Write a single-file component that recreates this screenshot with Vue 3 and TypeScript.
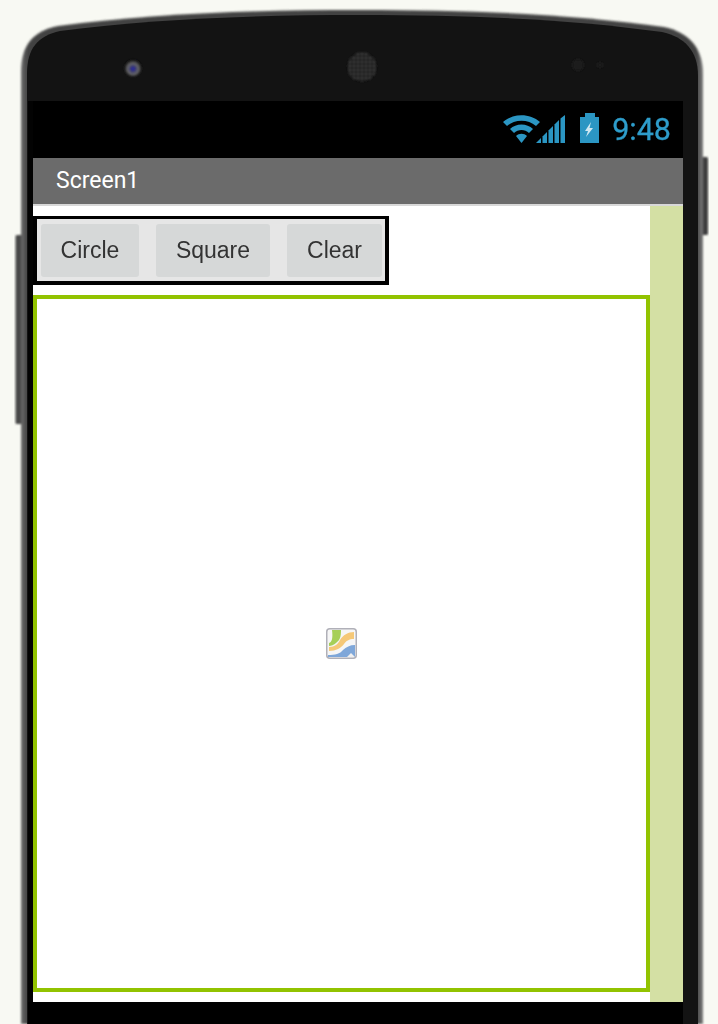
<script setup lang="ts">
const buttons: { label: string; width: number }[] = [
  { label: 'Circle', width: 98 },
  { label: 'Square', width: 114 },
  { label: 'Clear', width: 95 },
]
</script>

<template>
  <div class="page">
    <svg class="body" width="718" height="1024" viewBox="0 0 718 1024">
      <defs>
        <linearGradient id="edge" x1="0" y1="0" x2="1" y2="0">
          <stop offset="0" stop-color="#6c6c6c" />
          <stop offset="0.01" stop-color="#424242" />
          <stop offset="0.99" stop-color="#424242" />
          <stop offset="1" stop-color="#7a7a7a" />
        </linearGradient>
        <radialGradient id="lens" cx="0.5" cy="0.55" r="0.5">
          <stop offset="0" stop-color="#2626c8" />
          <stop offset="0.28" stop-color="#30306a" />
          <stop offset="0.62" stop-color="#6c6c6e" />
          <stop offset="1" stop-color="#141414" />
        </radialGradient>
        <pattern id="mesh" width="4" height="4" patternUnits="userSpaceOnUse">
          <rect width="4" height="4" fill="#1a1a1a" />
          <circle cx="2" cy="2" r="1.3" fill="#444" />
        </pattern>
        <filter id="soft"><feGaussianBlur stdDeviation="0.8" /></filter>
      </defs>
      <rect x="15.5" y="235" width="10" height="189" rx="1.5" fill="#474747" filter="url(#soft)" />
      <rect x="698" y="157" width="10" height="78" rx="1.5" fill="#3c3c3c" filter="url(#soft)" />
      <path
        d="M21 1024V72C21 45 33 31 58 26C150 14 250 10 360 10C470 10 570 14 664 27C688 32 703 47 703 74V1024Z"
        fill="url(#edge)"
        filter="url(#soft)"
      />
      <path
        d="M27 1024V74C27 48 38 36 60 31C150 19 250 15 360 15C470 15 570 19 662 32C684 37 698 50 698 76V1024Z"
        fill="#131313"
      />
      <rect x="28" y="101" width="5" height="923" fill="#030303" />
      <rect x="28" y="1002" width="655" height="22" fill="#000" />
      <circle cx="133" cy="68" r="8.5" fill="url(#lens)" filter="url(#soft)" />
      <circle cx="362" cy="67" r="14.5" fill="url(#mesh)" filter="url(#soft)" />
      <circle cx="578" cy="65" r="6" fill="#1a1a1a" filter="url(#soft)" />
      <circle cx="600" cy="65" r="3" fill="#1b1b1b" filter="url(#soft)" />
    </svg>

    <div class="screen">
      <div class="status">
        <svg class="status-icons" width="100" height="34" viewBox="0 0 100 34">
          <g fill="#2b96c3">
            <path d="M3 9C13 0 30 0 40 9L36 13C28 6 15 6 7 13Z" />
            <path d="M10 16C16 10 27 10 33 16L29 20C25 16 18 16 14 20Z" />
            <path d="M16 23C19 20 24 20 27 23L21.5 30Z" />
            <path d="M36 30L41 25V30Z" />
            <path d="M42.5 30V23.5L47 19V30Z" />
            <path d="M48.5 30V17.5L53 13V30Z" />
            <path d="M54.5 30V11.5L59 7V30Z" />
            <path d="M60.5 30V5.5L65 2V30Z" />
            <path d="M80 4H85V0H95V4H99V30H80Z" />
          </g>
          <path d="M91 9L85 18H88L86 24L93 15H89.5Z" fill="#cfe8f2" />
        </svg>
        <span class="time">9:48</span>
      </div>
      <div class="title">Screen1</div>
      <div class="content">
        <div class="main">
          <div class="toolbar">
            <button
              v-for="b in buttons"
              :key="b.label"
              type="button"
              class="btn"
              :style="{ width: b.width + 'px' }"
            >
              {{ b.label }}
            </button>
          </div>
          <div class="canvas">
            <svg class="broken" width="31" height="31" viewBox="0 0 31 31">
              <rect x="0.75" y="0.75" width="29.5" height="29.5" rx="3" fill="#f6f6f6" stroke="#b0b0b8" stroke-width="1.5" />
              <path d="M6 2H15C15 9 14 12 10 15C8 17 5 18 3 18V15C6 14 7 10 6 2Z" fill="#a6cf58" />
              <path d="M28 4V11C23 11 20 13 18 16C15 20 10 23 3 23V19C9 19 12 16 14 12C17 7 22 4 28 4Z" fill="#f5c878" />
              <path d="M29 17V29H2V27C9 27 14 26 17 22C20 19 24 17 29 17Z" fill="#7fa7d9" />
              <path d="M21 29L25 25L29 29Z" fill="#f0f0f0" />
            </svg>
          </div>
        </div>
        <div class="strip"></div>
      </div>
    </div>
  </div>
</template>

<style scoped>
.page {
  position: relative;
  width: 718px;
  height: 1024px;
  overflow: hidden;
  background: #f8f9f3;
}
.body {
  position: absolute;
  left: 0;
  top: 0;
}
.screen {
  position: relative;
  width: 650px;
  margin-left: 33px;
  padding-top: 101px;
  display: flex;
  flex-direction: column;
}
.status {
  height: 57px;
  background: #000;
  display: flex;
  align-items: center;
  justify-content: flex-end;
  padding-right: 12px;
  gap: 12px;
  box-sizing: border-box;
}
.status-icons {
  margin-top: 1px;
  filter: blur(0.7px);
}
.time {
  font-family: Roboto, sans-serif;
  font-size: 30.5px;
  color: #2e9dcb;
  line-height: 1;
  margin-top: 1px;
  -webkit-text-stroke: 0.3px #2e9dcb;
  filter: blur(0.4px);
}
.title {
  height: 46px;
  box-sizing: content-box;
  border-bottom: 2px solid #d8d8d8;
  background: #6b6b6b;
  color: #fff;
  font-family: Roboto, sans-serif;
  font-size: 23px;
  line-height: 45px;
  padding-left: 23px;
}
.content {
  display: flex;
  height: 796px;
  background: #fff;
}
.main {
  width: 617px;
  padding-top: 10px;
  display: flex;
  flex-direction: column;
  align-items: flex-start;
}
.toolbar {
  box-sizing: border-box;
  width: 356px;
  height: 69px;
  border: 4px solid #000;
  border-top-width: 3px;
  background: #e6e6e6;
  padding: 5px 3px 4px 4px;
  display: flex;
  gap: 17px;
}
.btn {
  height: 53px;
  padding: 0;
  border: none;
  border-radius: 3px;
  background: #d6d8d8;
  color: #333;
  font-family: 'Liberation Sans', Arial, sans-serif;
  font-size: 23px;
  filter: blur(0.3px);
}
.canvas {
  box-sizing: border-box;
  width: 617px;
  height: 697px;
  margin-top: 10px;
  border: 4px solid #92c300;
  background: #fff;
  display: flex;
  align-items: center;
  justify-content: center;
}
.broken {
  filter: blur(0.6px);
}
.strip {
  width: 33px;
  background: #d4e0a4;
}
</style>

<style>
body {
  background: #f8f9f3;
}
</style>
